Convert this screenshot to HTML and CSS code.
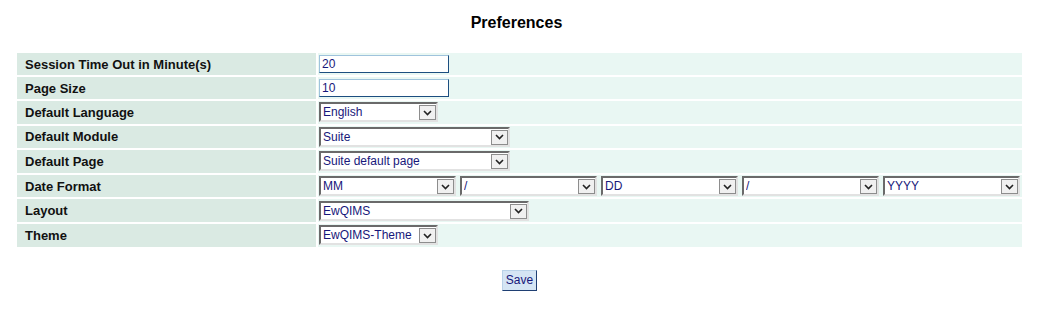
FILE: index.html
```html
<!DOCTYPE html>
<html lang="en">
<head>
<meta charset="UTF-8" />
<title>Preferences</title>
<link rel="stylesheet" href="styles.css">
</head>
<body>
  <h1 class="title">Preferences</h1>
  <form class="prefs" id="prefsForm">
    <table class="pref-table">
      <tr class="row-in">
        <th>Session Time Out in Minute(s)</th>
        <td><input class="text-in" type="text" value="20"></td>
      </tr>
      <tr class="row-in">
        <th>Page Size</th>
        <td><input class="text-in" type="text" value="10"></td>
      </tr>
      <tr class="row-sel">
        <th>Default Language</th>
        <td>
          <span class="sel w-short">
            <select><option>English</option></select>
            <span class="arrow"><svg width="9" height="6" viewBox="0 0 9 6"><path d="M1 1l3.5 3.5L8 1" fill="none" stroke="#222" stroke-width="1.6"/></svg></span>
          </span>
        </td>
      </tr>
      <tr class="row-sel">
        <th>Default Module</th>
        <td>
          <span class="sel w-mid">
            <select><option>Suite</option></select>
            <span class="arrow"><svg width="9" height="6" viewBox="0 0 9 6"><path d="M1 1l3.5 3.5L8 1" fill="none" stroke="#222" stroke-width="1.6"/></svg></span>
          </span>
        </td>
      </tr>
      <tr class="row-sel">
        <th>Default Page</th>
        <td>
          <span class="sel w-mid">
            <select><option>Suite default page</option></select>
            <span class="arrow"><svg width="9" height="6" viewBox="0 0 9 6"><path d="M1 1l3.5 3.5L8 1" fill="none" stroke="#222" stroke-width="1.6"/></svg></span>
          </span>
        </td>
      </tr>
      <tr class="row-sel">
        <th>Date Format</th>
        <td>
          <div class="date-fields">
            <span class="sel w-date">
              <select><option>MM</option></select>
              <span class="arrow"><svg width="9" height="6" viewBox="0 0 9 6"><path d="M1 1l3.5 3.5L8 1" fill="none" stroke="#222" stroke-width="1.6"/></svg></span>
            </span>
            <span class="sel w-date">
              <select><option>/</option></select>
              <span class="arrow"><svg width="9" height="6" viewBox="0 0 9 6"><path d="M1 1l3.5 3.5L8 1" fill="none" stroke="#222" stroke-width="1.6"/></svg></span>
            </span>
            <span class="sel w-date">
              <select><option>DD</option></select>
              <span class="arrow"><svg width="9" height="6" viewBox="0 0 9 6"><path d="M1 1l3.5 3.5L8 1" fill="none" stroke="#222" stroke-width="1.6"/></svg></span>
            </span>
            <span class="sel w-date">
              <select><option>/</option></select>
              <span class="arrow"><svg width="9" height="6" viewBox="0 0 9 6"><path d="M1 1l3.5 3.5L8 1" fill="none" stroke="#222" stroke-width="1.6"/></svg></span>
            </span>
            <span class="sel w-date">
              <select><option>YYYY</option></select>
              <span class="arrow"><svg width="9" height="6" viewBox="0 0 9 6"><path d="M1 1l3.5 3.5L8 1" fill="none" stroke="#222" stroke-width="1.6"/></svg></span>
            </span>
          </div>
        </td>
      </tr>
      <tr class="row-sel">
        <th>Layout</th>
        <td>
          <span class="sel w-wide">
            <select><option>EwQIMS</option></select>
            <span class="arrow"><svg width="9" height="6" viewBox="0 0 9 6"><path d="M1 1l3.5 3.5L8 1" fill="none" stroke="#222" stroke-width="1.6"/></svg></span>
          </span>
        </td>
      </tr>
      <tr class="row-sel">
        <th>Theme</th>
        <td>
          <span class="sel w-short">
            <select><option>EwQIMS-Theme</option></select>
            <span class="arrow"><svg width="9" height="6" viewBox="0 0 9 6"><path d="M1 1l3.5 3.5L8 1" fill="none" stroke="#222" stroke-width="1.6"/></svg></span>
          </span>
        </td>
      </tr>
    </table>
    <div class="actions">
      <button class="save" type="submit">Save</button>
    </div>
  </form>
</body>
</html>
```

FILE: styles.css
```css
* {
  box-sizing: border-box;
}
body {
  margin: 0;
  padding: 0 0 0 15px;
  font-family: 'Liberation Sans', Arial, sans-serif;
  background: #fff;
  color: #000;
}
.title {
  width: 1003px;
  margin: 0;
  padding-top: 14px;
  height: 51px;
  font-size: 16px;
  line-height: 18px;
  font-weight: 700;
  text-align: center;
}
.prefs {
  width: 1009px;
  margin: 0;
}
.pref-table {
  width: 1009px;
  border-collapse: separate;
  border-spacing: 2px;
}
.pref-table th {
  width: 299px;
  padding: 0 0 0 8px;
  text-align: left;
  font-size: 13px;
  font-weight: 700;
  color: #111;
  background: #daeae3;
  vertical-align: middle;
}
.pref-table td {
  padding: 0 0 0 1px;
  background: #e9f7f3;
  vertical-align: middle;
}
.row-in th,
.row-in td {
  height: 22px;
}
.row-sel th,
.row-sel td {
  height: 22.6px;
}
.text-in {
  display: block;
  width: 130px;
  height: 18px;
  margin: 0;
  padding: 0 2px;
  border: 1px solid;
  border-color: #9fc3dc #1c4e80 #1c4e80 #9fc3dc;
  font-family: 'Liberation Sans', Arial, sans-serif;
  font-size: 12px;
  color: #17177a;
  background: #fff;
  outline: none;
}
.sel {
  position: relative;
  display: inline-block;
  vertical-align: middle;
  height: 20px;
}
.sel select {
  appearance: none;
  -webkit-appearance: none;
  display: block;
  width: 100%;
  height: 20px;
  margin: 0;
  padding: 0 20px 0 2px;
  border: 2px solid;
  border-color: #6a6a6a #e2e2e2 #e2e2e2 #6a6a6a;
  border-radius: 0;
  background: #fff;
  font-family: 'Liberation Sans', Arial, sans-serif;
  font-size: 12px;
  color: #17177a;
  outline: none;
}
.sel .arrow {
  position: absolute;
  top: 3px;
  right: 2px;
  width: 17px;
  height: 15px;
  border: 1px solid #8d8d8d;
  background: #f0f0f0;
  display: flex;
  align-items: center;
  justify-content: center;
  pointer-events: none;
}
.w-short {
  width: 119px;
}
.w-mid {
  width: 191px;
}
.w-wide {
  width: 210px;
}
.w-date {
  width: 137px;
}
.date-fields {
  display: flex;
  gap: 4px;
}
.actions {
  display: flex;
  justify-content: center;
  padding-top: 21px;
}
.save {
  width: 35px;
  height: 21px;
  padding: 0;
  border: 1px solid;
  border-color: #b9d2e8 #1f3f73 #1f3f73 #b9d2e8;
  background: #d5e5f4;
  font-family: 'Liberation Sans', Arial, sans-serif;
  font-size: 12px;
  color: #17177a;
  cursor: pointer;
}
```
